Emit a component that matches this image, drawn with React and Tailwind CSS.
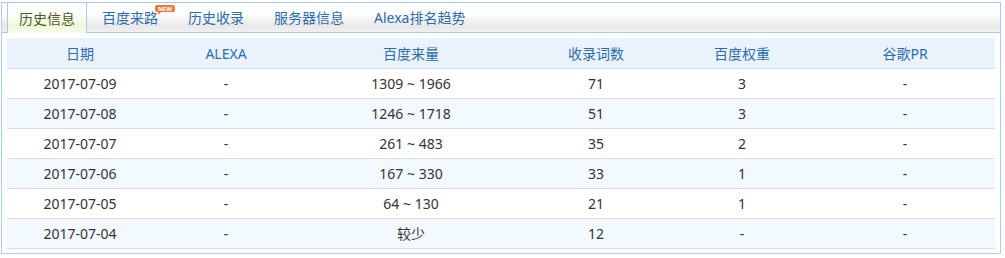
const tabs = ["历史信息", "百度来路", "历史收录", "服务器信息", "Alexa排名趋势"];

const cols = ["日期", "ALEXA", "百度来量", "收录词数", "百度权重", "谷歌PR"];

const rows = [
    ["2017-07-09", "-", "1309 ~ 1966", "71", "3", "-"],
    ["2017-07-08", "-", "1246 ~ 1718", "51", "3", "-"],
    ["2017-07-07", "-", "261 ~ 483", "35", "2", "-"],
    ["2017-07-06", "-", "167 ~ 330", "33", "1", "-"],
    ["2017-07-05", "-", "64 ~ 130", "21", "1", "-"],
    ["2017-07-04", "-", "较少", "12", "-", "-"],
];

const grid = "grid grid-cols-[146px_146px_224px_146px_146px_180px]";

export default function App() {
    return (
        <div className="min-h-screen bg-white pt-[2px] pl-[1px] font-['Noto_Sans','Noto_Sans_CJK_SC',sans-serif] text-[14px]">
            <div className="w-[1000px]">
                {/* tab bar */}
                <div className="flex h-[31px] border border-[#a9c9ee] bg-[linear-gradient(to_bottom,#ffffff_35%,#e8e8e8_80%,#f1f1f1)] pl-[5px]">
                    {tabs.map((t, i) =>
                        i === 0 ? (
                            <div
                                key={t}
                                className="-mt-px -mb-px flex items-center border-x border-t border-[#a9c9ee] bg-[linear-gradient(to_bottom,#ffffff_35%,#eef8dc_75%,#f6fbec)] px-[11px] text-[#4e5a1c]"
                            >
                                {t}
                            </div>
                        ) : (
                            <div key={t} className="relative flex items-center px-[15px] text-[#2c6cad]">
                                {t}
                                {t === "百度来路" && (
                                    <span className="absolute top-[2px] right-[-2px] flex h-[7px] w-[20px] items-center justify-center rounded-[2px] bg-[#f27a3a] text-[6px] font-bold leading-none text-white">
                                        NEW
                                        <span className="absolute bottom-[-3px] left-[3px] h-0 w-0 border-t-[3px] border-r-[3px] border-t-[#f27a3a] border-r-transparent"></span>
                                    </span>
                                )}
                            </div>
                        )
                    )}
                </div>

                {/* table */}
                <div className="border-x border-b border-[#a8d4e3] px-[5px] pt-[5px] pb-[4px]">
                    <div className={`${grid} h-[31px] border-b border-[#d8dde3] bg-[#eaf3fb] text-[#2a6dae]`}>
                        {cols.map((c) => (
                            <div key={c} className="flex items-center justify-center">
                                {c}
                            </div>
                        ))}
                    </div>
                    {rows.map((r, i) => (
                        <div
                            key={r[0]}
                            className={`${grid} h-[30px] border-b border-[#dcdcdc] text-[#333333] ${i % 2 === 1 ? "bg-[#f3faff]" : "bg-white"}`}
                        >
                            {r.map((v, j) => (
                                <div key={j} className="flex items-center justify-center">
                                    {v}
                                </div>
                            ))}
                        </div>
                    ))}
                </div>
            </div>
        </div>
    );
}
